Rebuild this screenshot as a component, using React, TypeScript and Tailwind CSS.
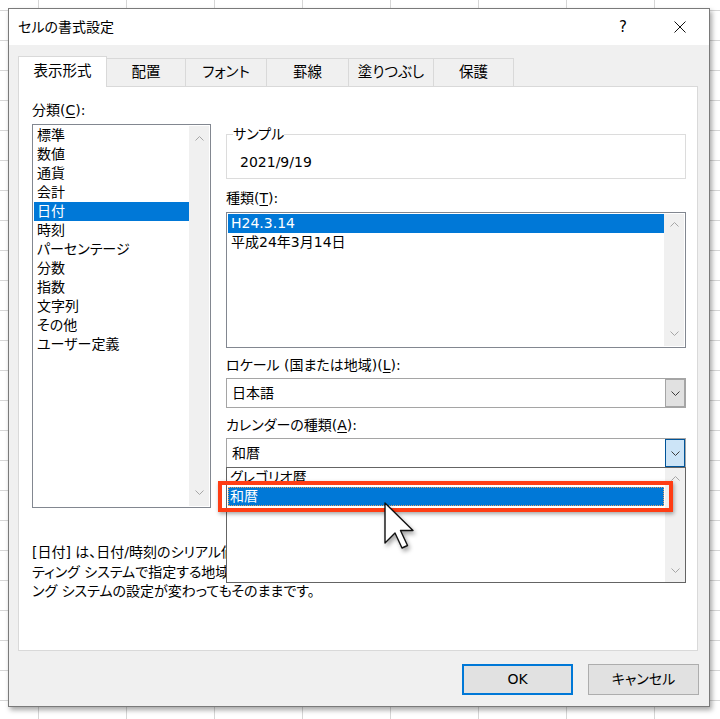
import React from "react";

const font = "font-['DejaVu_Sans','Noto_Sans_CJK_JP',sans-serif] [font-feature-settings:'palt']";

const categories = [
  "標準",
  "数値",
  "通貨",
  "会計",
  "日付",
  "時刻",
  "パーセンテージ",
  "分数",
  "指数",
  "文字列",
  "その他",
  "ユーザー定義",
];

const tabs = [
  { label: "配置", w: "w-[79px]" },
  { label: "フォント", w: "w-[81px]" },
  { label: "罫線", w: "w-[82px]" },
  { label: "塗りつぶし", w: "w-[85px]" },
  { label: "保護", w: "w-[80px]" },
];

const descLines = [
  "[日付] は、日付/時刻のシリアル値を日付形式で表示します。アスタリスク (*) で始まる日付形式は、オペレー",
  "ティング システムで指定する地域の日付/時刻の設定に対応します。アスタリスクのない形式は、オペレーティ",
  "ング システムの設定が変わってもそのままです。",
];

const Chevron = ({ up = false, color = "#a6a6a6" }: { up?: boolean; color?: string }) => (
  <svg width="9" height="5" viewBox="0 0 9 5" className={up ? "rotate-180" : ""}>
    <path d="M0.5 0.5 L4.5 4.5 L8.5 0.5" fill="none" stroke={color} strokeWidth="1" />
  </svg>
);

const ScrollBar = ({ className }: { className: string }) => (
  <div className={`w-[20px] bg-[#f0f0f0] flex flex-col items-center justify-between ${className}`}>
    <Chevron up />
    <Chevron />
  </div>
);

const Combo = ({ value, focused = false }: { value: string; focused?: boolean }) => (
  <div className="h-[30px] border border-[#a5a5a5] bg-white flex">
    <div className="flex-1 pl-[5px] leading-[28px]">{value}</div>
    <div
      className={`w-[20px] flex items-center justify-center border ${
        focused ? "bg-[#cce4f7] border-[#005499]" : "bg-[#e1e1e1] border-[#a5a5a5]"
      }`}
    >
      <Chevron color="#3c3c3c" />
    </div>
  </div>
);

const Cursor = () => (
  <svg
    width="34"
    height="50"
    viewBox="0 0 34 50"
    className="drop-shadow-[2px_3px_2px_rgba(0,0,0,0.35)]"
  >
    <polygon
      points="1,1 1,41 11,31 18,46 23.5,43.5 16.5,28.5 29,28.5"
      fill="#fff"
      stroke="#111"
      strokeWidth="1.4"
      strokeLinejoin="round"
    />
  </svg>
);

export default function App() {
  return (
    <div
      className={`w-[720px] h-[719px] overflow-hidden pl-2 pt-2 bg-white bg-[image:linear-gradient(to_right,#d6d6d6_1px,transparent_1px),linear-gradient(to_bottom,#d6d6d6_1px,transparent_1px)] bg-size-[88px_30px] bg-position-[38px_10px] text-black text-[14px] ${font}`}
    >
      <div className="w-[702px] h-[699px] border border-[#7a7a7a] bg-[#f0f0f0] shadow-[2px_3px_5px_rgba(0,0,0,0.35)] flex flex-col">
        {/* title bar */}
        <div className="h-[36px] bg-white flex items-center pl-[9px] pr-[6px]">
          <div className="flex-1 text-[14px]">セルの書式設定</div>
          <div className="flex gap-[11px]">
            <div className="w-[46px] text-center text-[15px]">?</div>
            <div className="w-[46px] flex items-center justify-center">
              <svg width="12" height="12" viewBox="0 0 12 12">
                <path d="M0.5 0.5 L11.5 11.5 M11.5 0.5 L0.5 11.5" stroke="#111" strokeWidth="1" />
              </svg>
            </div>
          </div>
        </div>

        {/* body */}
        <div className="flex-1 flex flex-col pt-[11px] pl-[9px] pr-[11px] pb-[11px]">
          {/* tabs */}
          <div className="h-[30px] flex items-end">
            <div className="relative z-10 w-[89px] h-[31px] -mb-px bg-white border border-b-0 border-[#d9d9d9] flex items-center justify-center text-[14.5px] pb-px">
              表示形式
            </div>
            {tabs.map((t) => (
              <div
                key={t.label}
                className={`${t.w} h-[28px] border-t border-r border-[#d9d9d9] flex items-center justify-center text-[14.5px]`}
              >
                {t.label}
              </div>
            ))}
          </div>

          {/* panel */}
          <div className="h-[565px] bg-white border border-[#d9d9d9] pt-[14px] pl-[13px] pr-[11px]">
            <div className="flex gap-[15px] items-start">
              {/* left column */}
              <div className="w-[179px]">
                <div className="h-[19px] leading-[19px]">
                  分類(<span className="underline underline-offset-2">C</span>):
                </div>
                <div className="mt-[4px] h-[384px] border border-[#828790] flex p-px">
                  <div className="flex-1">
                    {categories.map((c) => (
                      <div
                        key={c}
                        className={`h-[19px] leading-[19px] pl-[3px] ${
                          c === "日付" ? "bg-[#0078d7] text-white" : ""
                        }`}
                      >
                        {c}
                      </div>
                    ))}
                  </div>
                  <ScrollBar className="pt-[10px] pb-[11px]" />
                </div>
              </div>

              {/* right column */}
              <div className="flex-1">
                <fieldset className="mt-[25px] border border-[#dcdcdc]">
                  <legend className="ml-[6px] leading-[16px]">サンプル</legend>
                  <div className="pt-[11px] pb-[6px] pl-[13px] h-[36px] leading-[19px]">2021/9/19</div>
                </fieldset>

                <div className="mt-[10px] h-[19px] leading-[19px]">
                  種類(<span className="underline underline-offset-2">T</span>):
                </div>
                <div className="mt-[4px] h-[136px] border border-[#828790] flex p-px">
                  <div className="flex-1">
                    <div className="h-[19px] leading-[19px] pl-[3px] bg-[#0078d7] text-white">H24.3.14</div>
                    <div className="h-[19px] leading-[19px] pl-[3px]">平成24年3月14日</div>
                  </div>
                  <ScrollBar className="pt-[8px] pb-[10px]" />
                </div>

                <div className="mt-[8px] h-[19px] leading-[19px]">
                  ロケール (国または地域)(<span className="underline underline-offset-2">L</span>):
                </div>
                <div className="mt-[3px]">
                  <Combo value="日本語" />
                </div>

                <div className="mt-[8px] h-[19px] leading-[19px]">
                  カレンダーの種類(<span className="underline underline-offset-2">A</span>):
                </div>
                <div className="mt-[3px] relative">
                  <Combo value="和暦" focused />

                  {/* open drop-down list */}
                  <div className="absolute z-20 left-0 right-0 top-[29px] h-[116px] bg-white border border-[#646464] flex">
                    <div className="flex-1 px-px">
                      <div className="h-[19px] leading-[19px] pl-[2px]">グレゴリオ暦</div>
                      <div className="h-[19px] leading-[17px] pl-[1px] bg-[#0078d7] text-white border border-dotted border-[#e8a060]">
                        和暦
                      </div>
                    </div>
                    <ScrollBar className="pt-[8px] pb-[9px]" />

                    {/* highlight annotation */}
                    <div className="absolute left-[-9px] top-[13px] w-[455px] h-[31px] border-4 border-[#ff3d14] shadow-[1px_2px_4px_rgba(0,0,0,0.35)]" />

                    {/* mouse pointer */}
                    <div className="absolute left-[157px] top-[34px]">
                      <Cursor />
                    </div>
                  </div>
                </div>
              </div>
            </div>

            {/* description */}
            <div className="mt-[35px] leading-[19.5px] whitespace-nowrap overflow-hidden">
              {descLines.map((l) => (
                <div key={l}>{l}</div>
              ))}
            </div>
          </div>

          {/* buttons */}
          <div className="mt-[13px] flex justify-end gap-[15px] -mr-px">
            <div className="w-[111px] h-[31px] border-2 border-[#0078d7] bg-[#e1e1e1] flex items-center justify-center">
              OK
            </div>
            <div className="w-[111px] h-[31px] border border-[#adadad] bg-[#e1e1e1] flex items-center justify-center">
              キャンセル
            </div>
          </div>
        </div>
      </div>
    </div>
  );
}
